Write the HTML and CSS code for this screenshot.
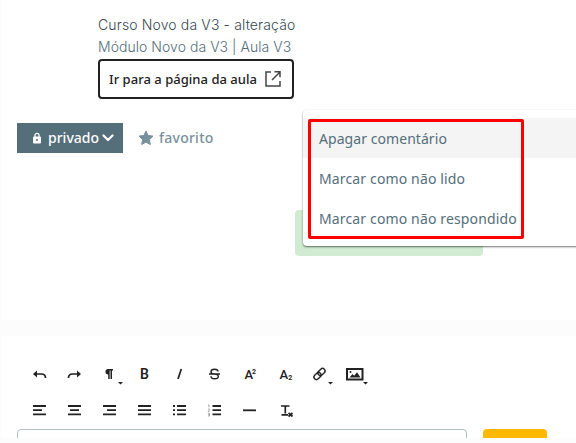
FILE: index.html
```html
<!DOCTYPE html>
<html lang="pt-BR">
<head>
<meta charset="utf-8">
<title>Comentários</title>
<link rel="stylesheet" href="styles.css">
</head>
<body>
<section class="comment">
  <div class="course">
    <div class="course-name">Curso Novo da V3 - alteração</div>
    <div class="module-name">Módulo Novo da V3 | Aula V3</div>
    <a class="lesson-link"><span class="lesson-text">Ir para a página da aula</span>
      <svg width="18" height="18" viewBox="0 0 18 18" fill="none" stroke="#444" stroke-width="1.500"><path d="M7 2H2v14h14v-5M10.500 1.800H16v5.500M16 2L8 10"/></svg>
    </a>
  </div>
  <div class="actions">
    <button class="private">
      <svg width="8" height="12" viewBox="0 0 8 12"><path d="M2 5V3.300a2 2 0 0 1 4 0V5" fill="none" stroke="#fff" stroke-width="1.300"/><rect y="4.500" width="8" height="7" rx="1" fill="#fff"/><circle cx="4" cy="8" r="1" fill="#546e7a"/></svg>
      <span class="private-text">privado</span>
      <svg width="12" height="8" viewBox="0 0 12 8" fill="none" stroke="#fff" stroke-width="2.200" stroke-linecap="round" stroke-linejoin="round"><path d="M1.500 1.500L6 6l4.500-4.500"/></svg>
    </button>
    <div class="favorite">
      <svg width="16" height="16" viewBox="0 0 16 16" fill="#78909c" stroke="#78909c" stroke-linejoin="round"><path d="M8 1l2.100 4.500 4.900.6-3.600 3.400.9 5L8 12.100l-4.300 2.400.9-5L1 6.100l4.900-.6z"/></svg>
      <span class="favorite-text">favorito</span>
    </div>
  </div>
  <div class="answered"></div>
  <div class="menu">
    <div class="item active">Apagar comentário</div>
    <div class="item">Marcar como não lido</div>
    <div class="item">Marcar como não respondido</div>
  </div>
  <div class="highlight"></div>
</section>
<section class="editor">
  <div class="toolbar">
    <svg viewBox="0 0 35 36"><path class="line" d="M13 16h6.500q4 0 4 4"/><path d="M11 16l4-3.500v7z"/></svg>
    <svg viewBox="0 0 35 36"><path class="line" d="M21 16h-5.500q-4 0-4 4"/><path d="M24 16l-4-3.500v7z"/></svg>
    <svg viewBox="0 0 35 36"><path d="M21 11v1.500h-1V21h-1.500v-8.500h-.8V21h-1.500v-4.500a2.750 2.750 0 0 1 0-5.500zM26 24h5l-2.500 2.500z"/></svg>
    <svg viewBox="0 0 35 36"><text class="bold" x="13" y="21">B</text></svg>
    <svg viewBox="0 0 35 36"><path class="line" d="M19.300 11L16 21"/></svg>
    <svg viewBox="0 0 35 36"><path class="line thin" d="M21 13.500q0-2.300-3.500-2.300T14 13.700q0 2.300 3.500 2.300 3.800.2 3.800 2.500 0 2.300-3.700 2.300T14 18.300M12 16h11"/></svg>
    <svg viewBox="0 0 35 36"><text class="letter" x="12.500" y="21">A<tspan class="small" dx="-1.200" dy="-5.500">2</tspan></text></svg>
    <svg viewBox="0 0 35 36"><text class="letter" x="12.500" y="21">A<tspan class="small" dy="1">2</tspan></text></svg>
    <svg viewBox="0 0 35 36"><g class="line thin" transform="rotate(-45 17.500 16)"><rect x="10.700" y="13.500" width="8" height="5" rx="2.500"/><rect x="16.300" y="13.500" width="8" height="5" rx="2.500"/></g><path d="M26 24h5l-2.500 2.500z"/></svg>
    <svg viewBox="0 0 35 36"><path class="line frame" d="M10 11h15.500v10.500H10z"/><circle cx="13.500" cy="14" r="1"/><path d="M12.500 19.500l3-3.500 1.700 1.700 2.800-3.500 3.500 5.300zM26 24h5l-2.500 2.500z"/></svg>
    <svg viewBox="0 0 35 36"><path class="line bars" d="M11 12h13M11 16.200h9M11 20.400h13"/></svg>
    <svg viewBox="0 0 35 36"><path class="line bars" d="M11 12h13M13 16.200h9M11 20.400h13"/></svg>
    <svg viewBox="0 0 35 36"><path class="line bars" d="M11 12h13M15 16.200h9M11 20.400h13"/></svg>
    <svg viewBox="0 0 35 36"><path class="line bars" d="M11 12h13M11 16.200h13M11 20.400h13"/></svg>
    <svg viewBox="0 0 35 36"><path class="line bars" d="M11 12h2M15 12h9M11 16.200h2M15 16.200h9M11 20.400h2M15 20.400h9"/></svg>
    <svg viewBox="0 0 35 36"><path class="line bars" d="M15.500 12H24M15.500 16.200H24M15.500 20.400H24"/><path class="numbers" d="M11 11h1v2.500M11 15h1.500v1L11 17.500h1.500M11 19.300h1.500V22H11M11 20.700h1.500"/></svg>
    <svg viewBox="0 0 35 36"><path class="line bars" d="M11 16.300h13"/></svg>
    <svg viewBox="0 0 35 36"><path class="line" d="M14 12h8.500M18.300 12v7.500M14.500 20.800h6.500M21.500 19l4 3.500m0-3.500l-4 3.500"/></svg>
  </div>
  <div class="inputs"><div class="textarea"></div><div class="send"></div></div>
</section>
</body>
</html>
```
FILE: styles.css
```css
* { box-sizing: border-box; }
body { margin: 0; height: 443px; overflow: hidden; background: #fcfcfc; font-family: "Noto Sans", sans-serif; padding-left: 1px; }
svg { display: block; flex: none; }
.comment { position: relative; height: 320px; background: #fff; padding: 14px 0 0 16px; overflow: hidden; }
.course { padding-left: 81px; }
.course-name, .module-name { font: 300 14px/22px Inter, sans-serif; color: #37474f; white-space: nowrap; letter-spacing: .14px; }
.module-name { color: #546e7a; letter-spacing: .04px; }
.lesson-link { display: flex; align-items: center; justify-content: space-between; width: 196px; height: 40px; margin-top: 1px; border: 2px solid #212121; border-radius: 4px; padding: 0 10px 0 9px; font-size: 13px; font-weight: 500; letter-spacing: .03px; color: #212121; white-space: nowrap; }
.actions { display: flex; margin-top: 24px; align-items: center; }
.private { display: flex; align-items: center; width: 106px; height: 30px; border: 0; padding: 0 0 1px 16px; background: #546e7a; color: #fff; font: 500 14px "Noto Sans", sans-serif; }
.private-text { margin: 0 3px 0 7px; }
.favorite { display: flex; align-items: center; gap: 5px; margin: -1px 0 0 15px; font-size: 14px; font-weight: 500; letter-spacing: .25px; color: #78909c; }
.answered { position: absolute; left: 294px; top: 210px; width: 188px; height: 46px; border-radius: 4px; background: #d0ebd2; }
.menu { position: absolute; left: 302px; top: 110px; width: 290px; height: 136px; padding: 8px 0; background: #fff; border-radius: 4px; box-shadow: 0 1px 2px rgba(0,0,0,.55); }
.item { height: 40px; padding-left: 16px; line-height: 41px; font-size: 14px; letter-spacing: .14px; color: #546e7a; white-space: nowrap; }
.item:first-child { letter-spacing: .06px; }
.active { background: #f4f4f4; }
.highlight { position: absolute; left: 307px; top: 119px; width: 216px; height: 120px; border: 3px solid #f00; border-radius: 2px; }
.editor { margin-top: 16px; height: 102px; background: #fff; padding: 22px 0 0 21px; overflow: hidden; }
.toolbar { display: grid; grid-template-columns: repeat(10, 35px); grid-auto-rows: 36px; height: 71px; }
.toolbar svg { width: 35px; height: 36px; fill: #222; }
.toolbar .line { fill: none; stroke: #222; stroke-width: 1.7; }
.toolbar .thin { stroke-width: 1.4; }
.toolbar .frame { stroke-width: 2; }
.toolbar .bars { stroke-width: 1.8; }
.numbers { fill: none; stroke: #777; stroke-width: .6; }
.bold { font: 600 14px Roboto, sans-serif; }
.letter { font: 500 13px Roboto, sans-serif; }
.small { font: 700 7px Roboto, sans-serif; }
.inputs { display: flex; gap: 16px; margin-left: -5px; }
.textarea { width: 450px; height: 30px; border: 1px solid #b0bec5; border-radius: 4px; }
.send { width: 64px; height: 30px; background: #ffb900; border-radius: 4px; }
```
